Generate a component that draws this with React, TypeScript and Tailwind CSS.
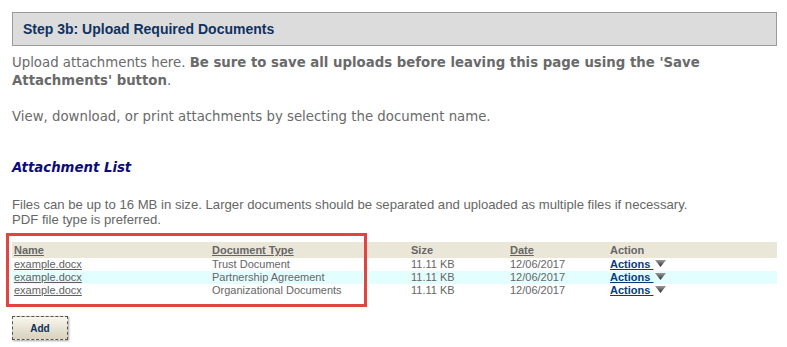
import React from "react";

const rows = [
  { name: "example.docx", type: "Trust Document", size: "11.11 KB", date: "12/06/2017" },
  { name: "example.docx", type: "Partnership Agreement", size: "11.11 KB", date: "12/06/2017" },
  { name: "example.docx", type: "Organizational Documents", size: "11.11 KB", date: "12/06/2017" },
];

function Caret() {
  return (
    <svg width="11" height="7" viewBox="0 0 11 7" className="inline-block ml-[2px] align-[1px]">
      <defs>
        <linearGradient id="cg" x1="0" y1="0" x2="0" y2="1">
          <stop offset="0" stopColor="#9a9a9a" />
          <stop offset="1" stopColor="#2e2e2e" />
        </linearGradient>
      </defs>
      <polygon points="0,0 11,0 5.5,7" fill="url(#cg)" />
    </svg>
  );
}

export default function App() {
  return (
    <div className="w-[787px] h-[347px] bg-white overflow-hidden pl-3 pr-[10px] pt-3">
      {/* Step header */}
      <div className="h-[34px] border border-[#9a9a9a] bg-[#dcdcdc] flex items-center pl-[10px]">
        <h2 className="font-['Liberation_Sans',Arial,sans-serif] font-bold text-[14px] text-[#10325f]">
          Step 3b: Upload Required Documents
        </h2>
      </div>

      <div className="font-['DejaVu_Sans',Verdana,sans-serif] text-[13.3px] leading-[18px] text-[#6a6a6a]">
        <p className="mt-2 pr-[60px]">
          Upload attachments here. <b>Be sure to save all uploads before leaving this page using the 'Save Attachments' button</b>.
        </p>
        <p className="mt-[18px]">View, download, or print attachments by selecting the document name.</p>

        <h3 className="mt-[33px] text-[13.3px] font-bold italic text-[#0c0c78]">Attachment List</h3>
      </div>

      <p className="mt-5 font-['Liberation_Sans',Arial,sans-serif] text-[13.15px] leading-[15px] text-[#666]">
        Files can be up to 16 MB in size. Larger documents should be separated and uploaded as multiple files if necessary.
        <br />
        PDF file type is preferred.
      </p>

      {/* Attachment table */}
      <div className="relative mt-[15px]">
        <table className="w-full border-collapse font-['Liberation_Sans',Arial,sans-serif] text-[11px] text-[#666]">
          <colgroup>
            <col className="w-[198px]" />
            <col className="w-[199px]" />
            <col className="w-[99px]" />
            <col className="w-[100px]" />
            <col />
          </colgroup>
          <thead>
            <tr className="bg-[#ebe7d8] h-[16px] font-bold text-left">
              <th className="pl-[2px] pt-[1px] leading-[13px] underline">Name</th>
              <th className="pl-[2px] pt-[1px] leading-[13px] underline">Document Type</th>
              <th className="pl-[2px] pt-[1px] leading-[13px]">Size</th>
              <th className="pl-[2px] pt-[1px] leading-[13px] underline">Date</th>
              <th className="pl-[2px] pt-[1px] leading-[13px]">Action</th>
            </tr>
          </thead>
          <tbody>
            {rows.map((r, i) => (
              <tr key={i} className={i === 1 ? "bg-[#e3fefe] h-[13px]" : "h-[13px]"}>
                <td className="pl-[2px] leading-[13px]">
                  <a className="underline text-[#5f5f5f]">{r.name}</a>
                </td>
                <td className="pl-[2px] leading-[13px]">{r.type}</td>
                <td className="pl-[2px] leading-[13px]">{r.size}</td>
                <td className="pl-[2px] leading-[13px]">{r.date}</td>
                <td className="pl-[2px] leading-[13px]">
                  <a className="font-bold text-[#0a3a80] underline decoration-[#0a3a80]">
                    Actions <Caret />
                  </a>
                </td>
              </tr>
            ))}
          </tbody>
        </table>
        {/* highlight annotation */}
        <div className="absolute left-[-6px] top-[-9px] w-[361px] h-[74px] border-[3px] border-[#e2453f] pointer-events-none" />
      </div>

      <button className="mt-[19px] w-[56px] h-[24px] border border-dashed border-[#555] bg-gradient-to-b from-[#f8f6ee] to-[#d8d2bc] shadow-[1px_1px_2px_rgba(0,0,0,0.35)] font-['Liberation_Sans',Arial,sans-serif] font-bold text-[10px] text-[#0c2d5e]">
        Add
      </button>
    </div>
  );
}
